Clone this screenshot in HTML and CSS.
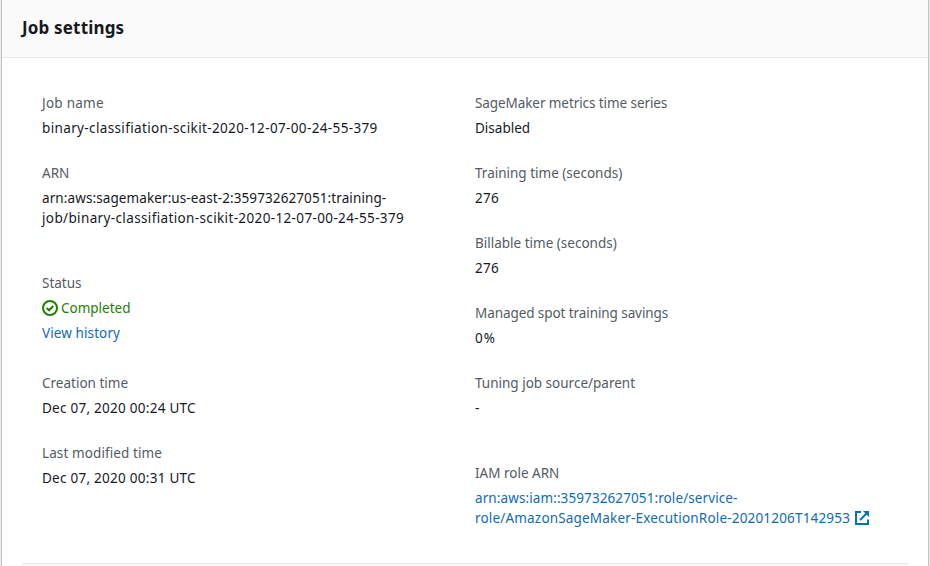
FILE: index.html
```html
<!DOCTYPE html>
<html lang="en">
<head>
<meta charset="utf-8">
<title>Job settings</title>
<link rel="stylesheet" href="styles.css">
</head>
<body>
<section class="panel">
  <header class="panel-header"><h2>Job settings</h2></header>
  <div class="columns">
    <dl class="column">
      <div class="field"><dt class="loose">Job name</dt><dd><span class="id">binary-classifiation-scikit-2020-12-07-00-24-55-379</span></dd></div>
      <div class="field spaced"><dt>ARN</dt><dd><span class="arn">arn:aws:sagemaker:us-east-2:359732627051:training-</span><br><span class="id">job/binary-classifiation-scikit-2020-12-07-00-24-55-379</span></dd></div>
      <div class="field status-field"><dt>Status</dt>
        <dd class="status"><svg class="check" viewBox="0 0 16 16"><circle cx="8" cy="8" r="7"/><path d="M4.7 8l2.4 2.3 4.2-4.3"/></svg><span>Completed</span></dd>
        <dd><a href="#" class="history">View history</a></dd></div>
      <div class="field"><dt>Creation time</dt><dd><span class="date">Dec 07, 2020 00:24 UTC</span></dd></div>
      <div class="field"><dt class="history">Last modified time</dt><dd><span class="date">Dec 07, 2020 00:31 UTC</span></dd></div>
    </dl>
    <dl class="column">
      <div class="field"><dt class="tight">SageMaker metrics time series</dt><dd>Disabled</dd></div>
      <div class="field"><dt>Training time (seconds)</dt><dd class="loose">276</dd></div>
      <div class="field"><dt>Billable time (seconds)</dt><dd class="loose">276</dd></div>
      <div class="field"><dt class="tight">Managed spot training savings</dt><dd class="percent">0%</dd></div>
      <div class="field spaced"><dt>Tuning job source/parent</dt><dd>-</dd></div>
      <div class="field"><dt>IAM role ARN</dt><dd><a href="#"><span class="arn">arn:aws:iam::359732627051:role/service-</span><br><span class="role-name">role/AmazonSageMaker-ExecutionRole-20201206T142953</span><svg class="external" viewBox="0 0 14 14"><path d="M6 1H1v12h12V8.500M5 9l6.500-6.500"/><path class="head" d="M8 0h6v6l-2-2-2-2z"/></svg></a></dd></div>
    </dl>
  </div>
  <div class="next-section"></div>
</section>
</body>
</html>
```
FILE: styles.css
```css
* { box-sizing: border-box; }
body {
  margin: 0;
  height: 566px;
  overflow: hidden;
  background: #fff;
  color: #16191f;
  font: 13.5px/20px "Noto Sans", "Open Sans", sans-serif;
}
.panel {
  width: 928px;
  height: 566px;
  margin-left: 1px;
  border: solid #bcc4c5;
  border-width: 0 1px;
  box-shadow: 0 0 0 1px #e9ebed;
  display: flex;
  flex-direction: column;
}
.panel-header {
  height: 58px;
  padding: 17px 20px 0;
  background: #fafafa;
  border-bottom: 1px solid #e6e9e9;
}
h2 { margin: 0; font-size: 17px; line-height: 22px; font-weight: 700; letter-spacing: 0.17px; }
.columns {
  display: grid;
  grid-template-columns: 433px 1fr;
  height: 505px;
  padding: 35px 20px 0 40px;
}
.column { margin: 0; }
.field { margin-bottom: 25px; white-space: nowrap; }
.spaced { margin-bottom: 45px; }
.status-field { margin-bottom: 30px; }
dt { color: #545b64; }
dd { margin: 5px 0 0; }
a { color: #0f6cb6; text-decoration: none; }
.id { letter-spacing: 0.365px; }
.arn { letter-spacing: 0.1px; }
.role-name { letter-spacing: 0.18px; }
.date { letter-spacing: 0.26px; }
.loose { letter-spacing: 0.25px; }
.tight { letter-spacing: -0.08px; }
.history { letter-spacing: 0.1px; }
.percent { letter-spacing: 1px; }
.status { display: flex; align-items: center; gap: 3px; color: #1d8102; }
.check { width: 16px; height: 16px; fill: none; stroke: currentColor; stroke-width: 2; }
.external { width: 14px; height: 14px; margin-left: 5px; vertical-align: -2px; fill: none; stroke: #0073bb; stroke-width: 2; }
.external .head { fill: #0073bb; stroke: none; }
.next-section { flex: 1; margin: 0 20px; border-top: 1px solid #e6e9e9; background: #fafafa; }
```
